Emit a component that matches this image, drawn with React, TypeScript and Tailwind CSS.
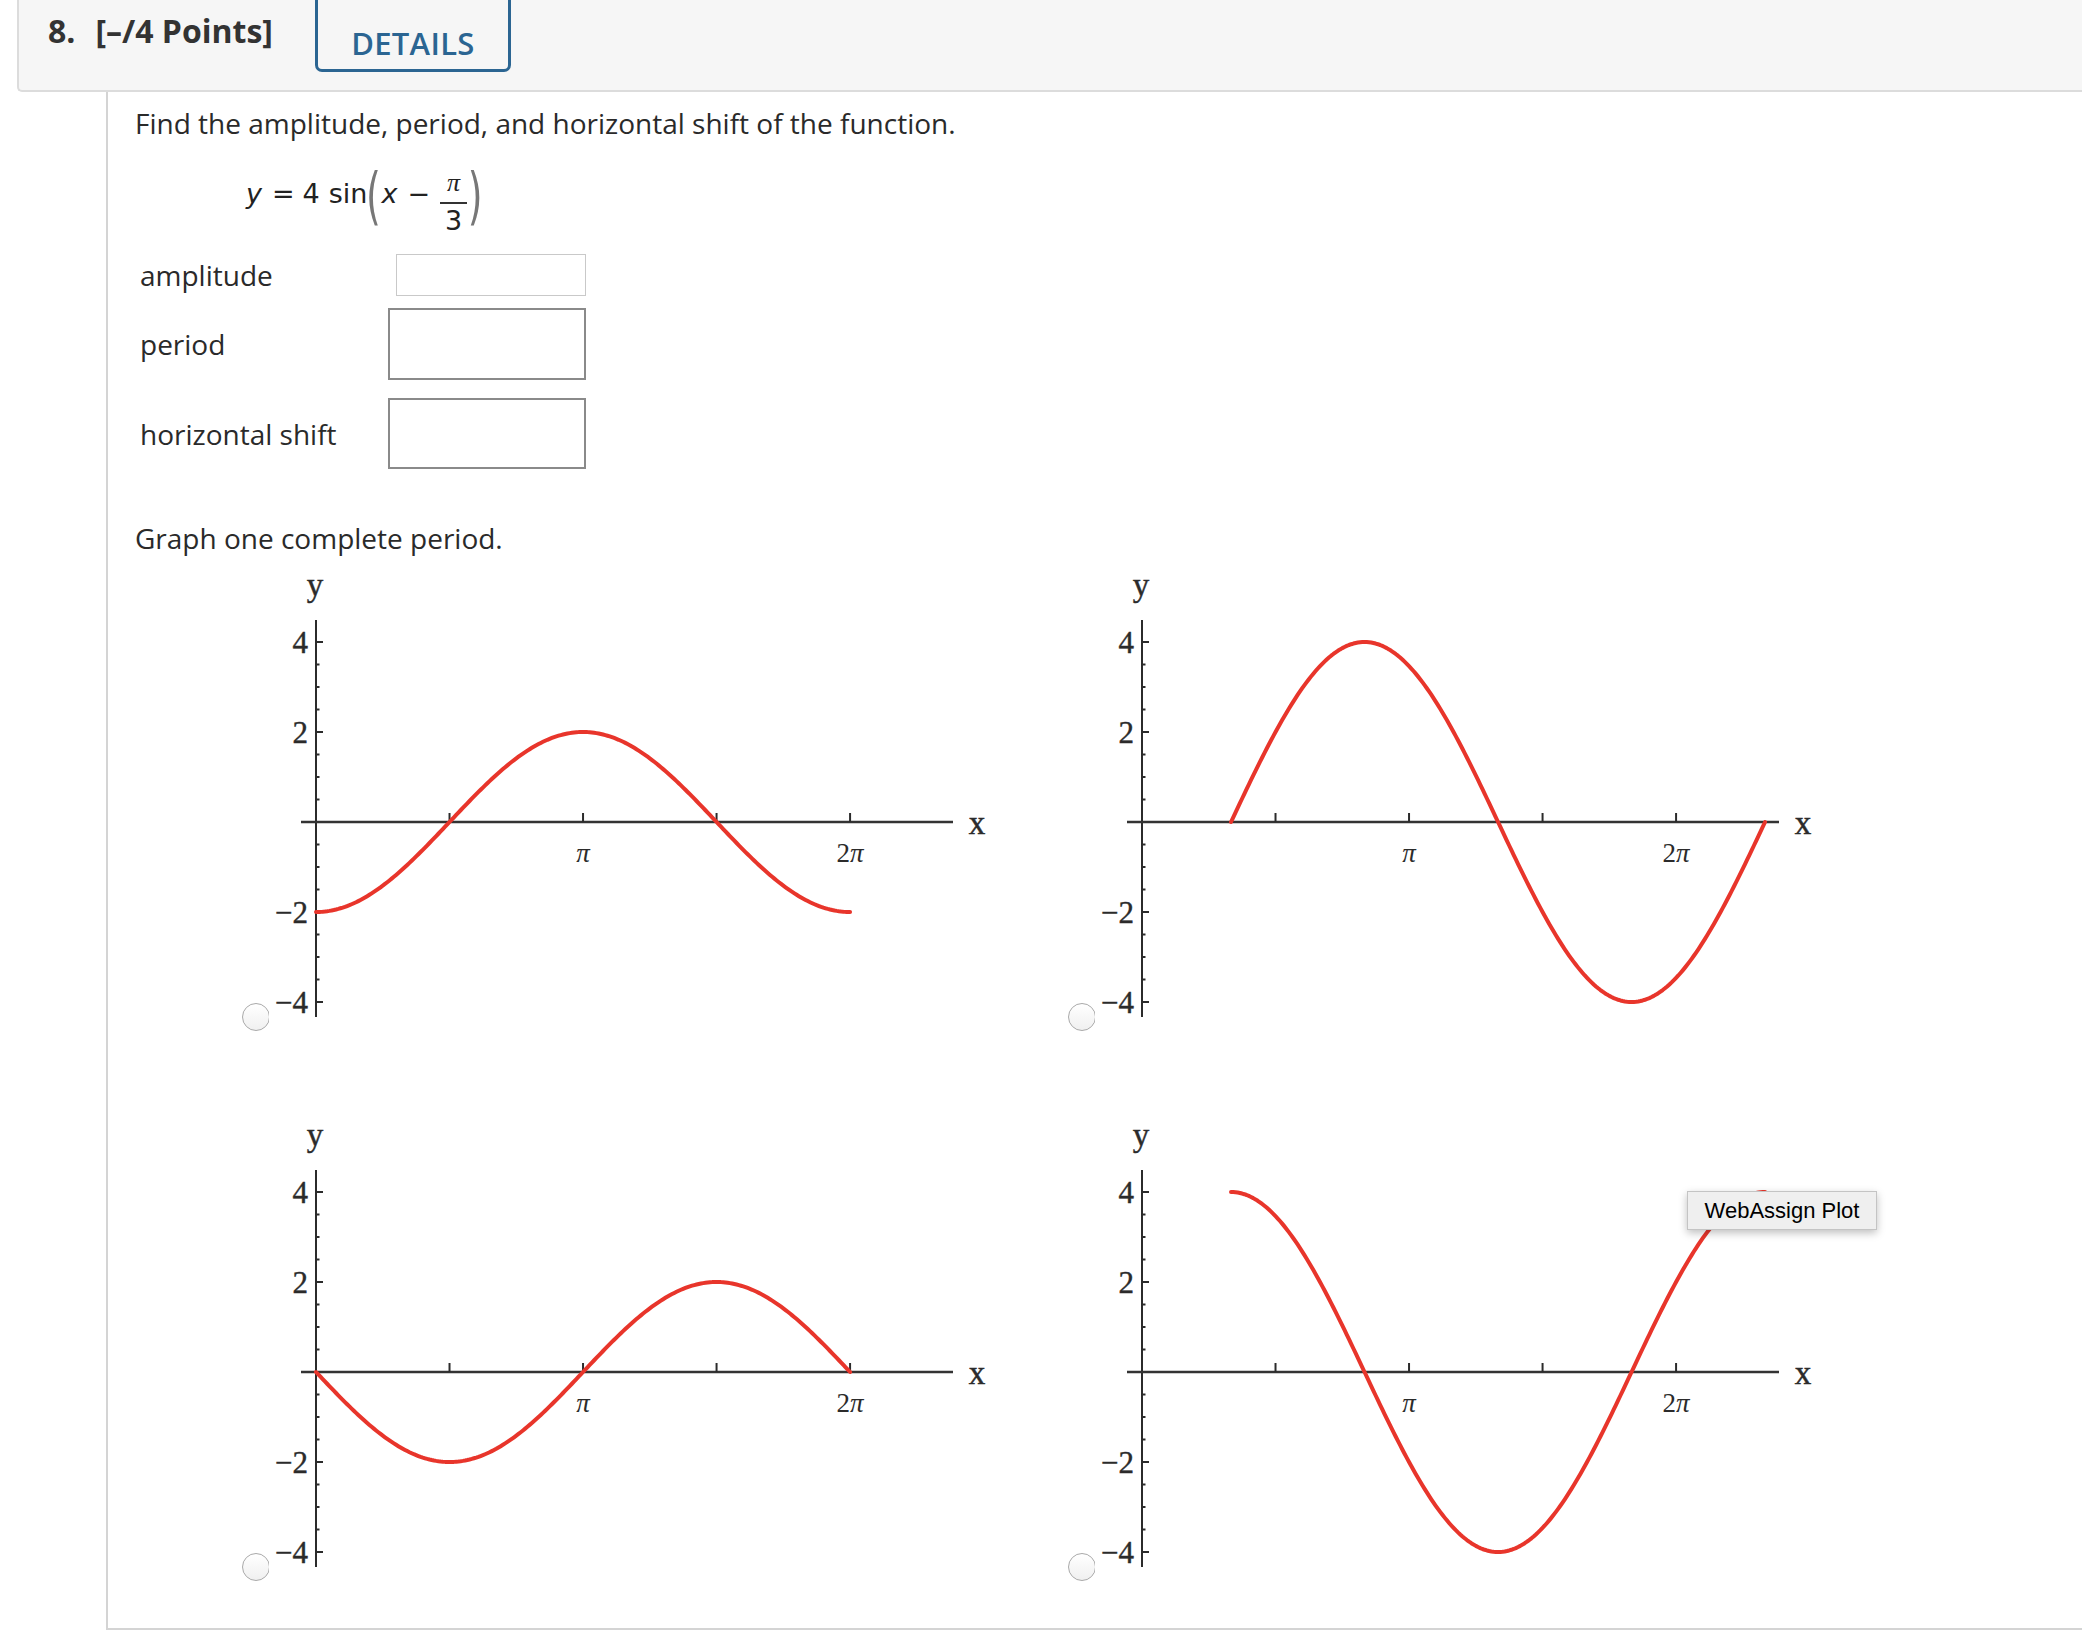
import React from "react";

const PX = 85; // px per radian
const PY = 45; // px per unit
const X0 = 80;
const Y0 = 262;

function curve(f: (x: number) => number, a: number, b: number) {
  const n = 240;
  let d = "";
  for (let i = 0; i <= n; i++) {
    const x = a + ((b - a) * i) / n;
    const X = X0 + x * PX;
    const Y = Y0 - f(x) * PY;
    d += (i === 0 ? "M" : "L") + X.toFixed(2) + " " + Y.toFixed(2) + " ";
  }
  return d;
}

function Plot({ f, a, b }: { f: (x: number) => number; a: number; b: number }) {
  const minor: number[] = [];
  for (let k = -8; k <= 8; k++) {
    const v = k / 2;
    if (v !== 0 && v % 2 !== 0) minor.push(v);
  }
  const major = [4, 2, -2, -4];
  const xt = [1, 2, 3, 4].map((k) => X0 + (k * Math.PI * PX) / 2);
  const serif = "'Liberation Serif', 'Times New Roman', serif";
  return (
    <div className="relative w-[760px] h-[470px]">
      <span className="absolute left-[6px] top-[443px] w-[28px] h-[28px] rounded-full border border-[#a9a9a9] bg-gradient-to-b from-white to-[#f0f0f0]" />
      <svg width="760" height="470" className="block relative">
        <rect x="33" y="0" width="727" height="470" fill="white" />
        <text x="79" y="36" fontSize="33" fontFamily={serif} textAnchor="middle" fill="#2b2b2b" stroke="#2b2b2b" strokeWidth="0.4">y</text>
        <line x1="80" y1="60" x2="80" y2="457" stroke="#2b2b2b" strokeWidth="2" />
        {major.map((v) => (
          <g key={v}>
            <line x1="80" y1={Y0 - v * PY} x2="87" y2={Y0 - v * PY} stroke="#2b2b2b" strokeWidth="2" />
            <text x="72" y={Y0 - v * PY + 11} fontSize="31" fontFamily={serif} textAnchor="end" fill="#2b2b2b" stroke="#2b2b2b" strokeWidth="0.4">
              {v < 0 ? "\u2212" + Math.abs(v) : String(v)}
            </text>
          </g>
        ))}
        {minor.map((v) => (
          <line key={v} x1="80" y1={Y0 - v * PY} x2="83.5" y2={Y0 - v * PY} stroke="#2b2b2b" strokeWidth="2" />
        ))}
        <line x1="65" y1={Y0} x2="717" y2={Y0} stroke="#333" strokeWidth="2.5" />
        {xt.map((x) => (
          <line key={x} x1={x} y1={Y0} x2={x} y2={Y0 - 9} stroke="#2b2b2b" strokeWidth="2" />
        ))}
        <text x={X0 + Math.PI * PX} y="302" fontSize="27" fontFamily={serif} textAnchor="middle" fill="#2b2b2b" fontStyle="italic">π</text>
        <text x={X0 + 2 * Math.PI * PX} y="302" fontSize="27" fontFamily={serif} textAnchor="middle" fill="#2b2b2b">
          2<tspan fontStyle="italic">π</tspan>
        </text>
        <text x="741" y="274" fontSize="33" fontFamily={serif} textAnchor="middle" fill="#2b2b2b" stroke="#2b2b2b" strokeWidth="0.5">x</text>
        <path d={curve(f, a, b)} fill="none" stroke="#e8352b" strokeWidth="4" strokeLinecap="round" strokeLinejoin="round" />
      </svg>
    </div>
  );
}

export default function App() {
  const P = Math.PI;
  return (
    <div className="w-[2082px] h-[1642px] bg-white overflow-hidden relative text-[#2a2a2a] font-['Open_Sans',sans-serif]">
      {/* header */}
      <div className="ml-[17px] h-[92px] bg-[#f6f6f6] border-l-2 border-b-2 border-[#dcdcdc] rounded-bl-[5px] flex items-start">
        <div className="mt-[15px] ml-[29px] text-[32px] leading-[32px] font-bold text-[#333] flex whitespace-nowrap">
          <span>8.</span>
          <span className="ml-[20px]">[–/4 Points]</span>
        </div>
        <div className="ml-[42px] -mt-[10px] w-[196px] h-[82px] shrink-0 border-[3px] border-[#2b6592] rounded-b-[7px] flex justify-center items-start pt-[35px]">
          <span className="text-[31px] leading-[31px] font-semibold tracking-[0.3px] text-[#2b6592]">DETAILS</span>
        </div>
      </div>

      {/* body */}
      <div className="ml-[106px] h-[1538px] border-l-2 border-b-2 border-[#d4d4d4] pl-[27px] pt-[11px] flex flex-col items-start">
        <p className="text-[28px] leading-[40px] whitespace-nowrap">
          Find the amplitude, period, and horizontal shift of the function.
        </p>

        {/* equation */}
        <div className="mt-[27px] ml-[111px] h-[60px] flex items-start text-[#222] text-[27px] leading-[24px] font-['DejaVu_Sans',Verdana,sans-serif]">
          <span className="mt-[12px] italic">y</span>
          <span className="mt-[12px] ml-[10px]">=</span>
          <span className="mt-[12px] ml-[8px]">4</span>
          <span className="mt-[12px] ml-[9px]">sin</span>
          <span className="mt-[7px] -ml-[3px] w-[18px] flex justify-center">
            <span className="inline-block text-[38px] leading-[38px] scale-y-[1.65] text-[#777]">(</span>
          </span>
          <span className="mt-[12px] -ml-[1px] italic">x</span>
          <span className="mt-[12px] ml-[10px]">−</span>
          <span className="ml-[10px] w-[27px] flex flex-col items-center">
            <span className="mt-[3px] text-[26px] leading-[20px] italic font-['Liberation_Serif',serif]">π</span>
            <span className="mt-[9px] w-full h-[2px] bg-[#333]" />
            <span className="mt-[5px] text-[27px] leading-[24px]">3</span>
          </span>
          <span className="mt-[7px] -ml-[1px] w-[18px] flex justify-center">
            <span className="inline-block text-[38px] leading-[38px] scale-y-[1.65] text-[#777]">)</span>
          </span>
        </div>

        {/* answer rows */}
        <div className="mt-[24px] flex items-center h-[42px]">
          <span className="ml-[5px] w-[248px] text-[28px] leading-[40px]">amplitude</span>
          <span className="ml-[8px] w-[190px] h-[42px] border border-[#c9c9c9] bg-white" />
        </div>
        <div className="mt-[12px] flex items-center h-[72px]">
          <span className="ml-[5px] w-[248px] text-[28px] leading-[40px]">period</span>
          <span className="w-[198px] h-[72px] border-2 border-[#8a8a8a] bg-white" />
        </div>
        <div className="mt-[18px] flex items-center h-[71px]">
          <span className="ml-[5px] w-[248px] text-[28px] leading-[40px] whitespace-nowrap">horizontal shift</span>
          <span className="w-[198px] h-[71px] border-2 border-[#8a8a8a] bg-white" />
        </div>

        <p className="mt-[49px] text-[28px] leading-[40px]">Graph one complete period.</p>

        <div className="mt-[2px] ml-[101px] grid grid-cols-[826px_826px] gap-y-[80px]">
          <Plot f={(x) => -2 * Math.cos(x)} a={0} b={2 * P} />
          <Plot f={(x) => 4 * Math.sin(x - P / 3)} a={P / 3} b={(7 * P) / 3} />
          <Plot f={(x) => -2 * Math.sin(x)} a={0} b={2 * P} />
          <Plot f={(x) => 4 * Math.cos(x - P / 3)} a={P / 3} b={(7 * P) / 3} />
        </div>
      </div>

      {/* tooltip */}
      <div className="absolute left-[1687px] top-[1191px] w-[190px] h-[39px] bg-[#efefef] border border-[#c4c4c4] shadow-[0_3px_8px_rgba(0,0,0,0.25)] flex items-center justify-center">
        <span className="text-[22px] leading-[22px] text-black font-['Liberation_Sans',Arial,sans-serif]">WebAssign Plot</span>
      </div>
    </div>
  );
}
